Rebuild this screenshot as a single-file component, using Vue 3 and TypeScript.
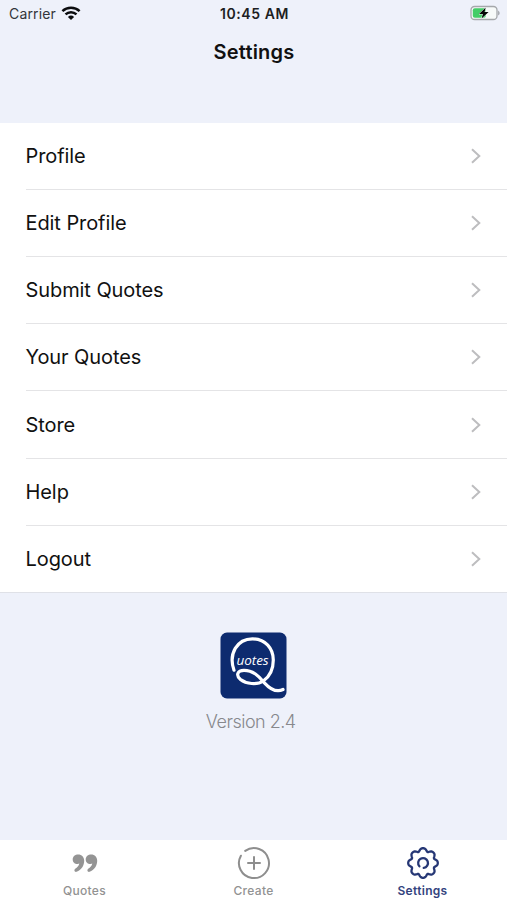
<script setup lang="ts">
interface MenuItem {
  label: string
}

const items: MenuItem[] = [
  { label: 'Profile' },
  { label: 'Edit Profile' },
  { label: 'Submit Quotes' },
  { label: 'Your Quotes' },
  { label: 'Store' },
  { label: 'Help' },
  { label: 'Logout' },
]

// Outline of an eight-lobed gear centred on (18, 18).
function gearPath(mid: number, depth: number): string {
  const points: string[] = []
  for (let deg = 0; deg < 360; deg += 3) {
    const t = (deg * Math.PI) / 180
    const r = mid + depth * (Math.cos(8 * t) - 0.18 * Math.cos(16 * t))
    points.push(`${(18 + r * Math.sin(t)).toFixed(2)} ${(18 - r * Math.cos(t)).toFixed(2)}`)
  }
  return `M${points.join('L')}Z`
}

const gear = gearPath(13.6, 1.45)
</script>

<template>
  <div class="screen">
    <header class="status">
      <div class="carrier">
        <span>Carrier</span>
        <svg class="wifi" width="20" height="15" viewBox="0 0 20 15">
          <path d="M1.4 5.2C6.2.7 13.8.7 18.6 5.2" />
          <path d="M4.5 8.4C7.6 5.5 12.4 5.5 15.5 8.4" />
          <path class="dot" d="M6.9 10.9Q10 8.3 13.1 10.9L10 14Z" />
        </svg>
      </div>
      <div class="time">10:45 AM</div>
      <svg class="battery" width="32" height="16" viewBox="0 0 32 16">
        <rect x="2" y="1.5" width="26" height="13" rx="3.6" fill="#f7faf9" stroke="#a5a8ab" stroke-width="1.3" />
        <rect x="3.8" y="3.3" width="13" height="9.4" rx="2" fill="#43cd67" />
        <path d="M29.2 5.4Q32 8 29.2 10.6Z" fill="#9a9da2" />
        <path d="M16.7 2.5L10 9H13.9L12.6 13.5L19.6 7H15.6Z" fill="#050706" stroke="#fff" stroke-width=".9" paint-order="stroke" />
      </svg>
    </header>
    <h1 class="title">Settings</h1>

    <ul class="menu">
      <li v-for="item in items" :key="item.label" class="row">
        <span class="label">{{ item.label }}</span>
        <svg class="chevron" width="12" height="18" viewBox="0 0 12 18">
          <path d="M2 2.2L9.3 9L2 15.8" />
        </svg>
      </li>
    </ul>

    <section class="about">
      <svg class="logo" width="67" height="67" viewBox="0 0 67 67">
        <rect x=".5" y=".5" width="66" height="66" rx="6.5" fill="#0d2b6f" />
        <path
          d="M14 38.2C8.2 22 17 6.8 32.5 6.8C45.5 6.8 53.3 16.5 53.3 28C53.3 38 49 45 43.3 49C37 53.3 26 51.8 20.5 47.5C15.5 43.2 17.5 38.4 24 38.4C34.5 38.4 40 46 44.4 50.8C49.8 56.7 56 61 63 57.5"
          fill="none" stroke="#fff" stroke-width="3.2" stroke-linecap="round" stroke-linejoin="round"
        />
        <text x="16.6" y="33.2" textLength="32" lengthAdjust="spacing">uotes</text>
      </svg>
      <p class="version">Version 2.4</p>
    </section>

    <nav class="tabs">
      <div class="tab">
        <svg width="36" height="36" viewBox="0 0 36 36">
          <g fill="#949494">
            <path d="M11.2 9.5C8.1 9.5 5.7 11.5 5.7 14.4C5.7 17.2 7.9 19 10.5 19C11.4 19 11.9 18.8 12.3 18.5C11.8 20.9 10.2 22.4 8.2 23.8C6.6 25 7.7 27.5 9.6 26.8C14.3 24.8 17.2 20.9 17.2 15.8C17.2 12 14.8 9.5 11.2 9.5Z" />
            <path d="M24.2 9.5C21.1 9.5 18.7 11.5 18.7 14.4C18.7 17.2 20.9 19 23.5 19C24.4 19 24.9 18.8 25.3 18.5C24.8 20.9 23.2 22.4 21.2 23.8C19.6 25 20.7 27.5 22.6 26.8C27.3 24.8 30.2 20.9 30.2 15.8C30.2 12 27.8 9.5 24.2 9.5Z" />
          </g>
        </svg>
        <span>Quotes</span>
      </div>
      <div class="tab">
        <svg width="36" height="36" viewBox="0 0 36 36">
          <g fill="none" stroke="#8e8e8e" stroke-width="2" stroke-linecap="round">
            <path d="M9.2 5.9A15 15 0 1 1 4.9 10.7" />
            <path d="M18 12V24M12 18H24" />
          </g>
        </svg>
        <span>Create</span>
      </div>
      <div class="tab active">
        <svg width="36" height="36" viewBox="0 0 36 36">
          <g fill="none" stroke="#263775" stroke-width="2.3" stroke-linecap="round" stroke-linejoin="round">
            <path :d="gear" />
            <path d="M14.4 21.3A4.9 4.9 0 1 1 18.7 22.9" />
          </g>
        </svg>
        <span>Settings</span>
      </div>
    </nav>
  </div>
</template>

<style>
body {
  margin: 0;
}
</style>

<style scoped>
.screen {
  display: flex;
  flex-direction: column;
  box-sizing: border-box;
  width: 507px;
  height: 900px;
  overflow: hidden;
  background: #eef1fa;
  color: #111;
  font-family: Inter, 'Liberation Sans', sans-serif;
}

.status {
  display: grid;
  grid-template-columns: 1fr auto 1fr;
  align-items: center;
  box-sizing: border-box;
  height: 28px;
  padding: 0 6px 2px 9px;
  font-size: 14px;
}

.carrier {
  display: flex;
  align-items: center;
  gap: 5px;
  color: #33353a;
  letter-spacing: 0.15px;
}

.wifi {
  fill: none;
  stroke: #0b0c0e;
  stroke-width: 2.5;
}

.wifi .dot {
  fill: #0b0c0e;
  stroke: none;
}

.time {
  margin-right: 1px;
  color: #1d1e22;
  font-weight: 600;
  letter-spacing: 0.6px;
}

.battery {
  justify-self: end;
}

.title {
  height: 94.6px;
  margin: 0;
  padding: 10px 0 0 1px;
  box-sizing: border-box;
  font-size: 20px;
  font-weight: 600;
  line-height: 28px;
  letter-spacing: 0.2px;
  text-align: center;
}

.menu {
  margin: 0;
  padding: 0;
  background: #fff;
  list-style: none;
  border-bottom: 1px solid #dfe1e7;
}

.row {
  display: flex;
  align-items: center;
  justify-content: space-between;
  box-sizing: border-box;
  height: 67.22px;
  margin-left: 26px;
  padding-right: 25px;
  border-bottom: 1px solid #e4e4e6;
}

.row:last-child {
  height: 66.2px;
  border-bottom: 0;
}

.label {
  margin-left: -0.5px;
  font-size: 20px;
  letter-spacing: -0.08px;
}

.chevron path {
  fill: none;
  stroke: #bdbdbf;
  stroke-width: 2;
}

.about {
  display: flex;
  flex: 1;
  flex-direction: column;
  align-items: center;
  padding: 39px 0 0 0.5px;
}

.logo text {
  fill: #fff;
  font-family: 'Open Sans', sans-serif;
  font-size: 13.5px;
  font-style: italic;
}

.version {
  margin: 9.5px 6px 0 0;
  color: #87888c;
  font-size: 18px;
  font-weight: 300;
  line-height: 26px;
  letter-spacing: -0.5px;
}

.tabs {
  display: grid;
  grid-template-columns: repeat(3, 1fr);
  height: 60px;
  background: #fff;
}

.tab {
  display: flex;
  flex-direction: column;
  align-items: center;
  padding-top: 5px;
  color: #929292;
  font-size: 12px;
  font-weight: 500;
  line-height: 20px;
  letter-spacing: 0.3px;
}

.tab.active {
  color: #33437e;
  font-weight: 600;
}
</style>
